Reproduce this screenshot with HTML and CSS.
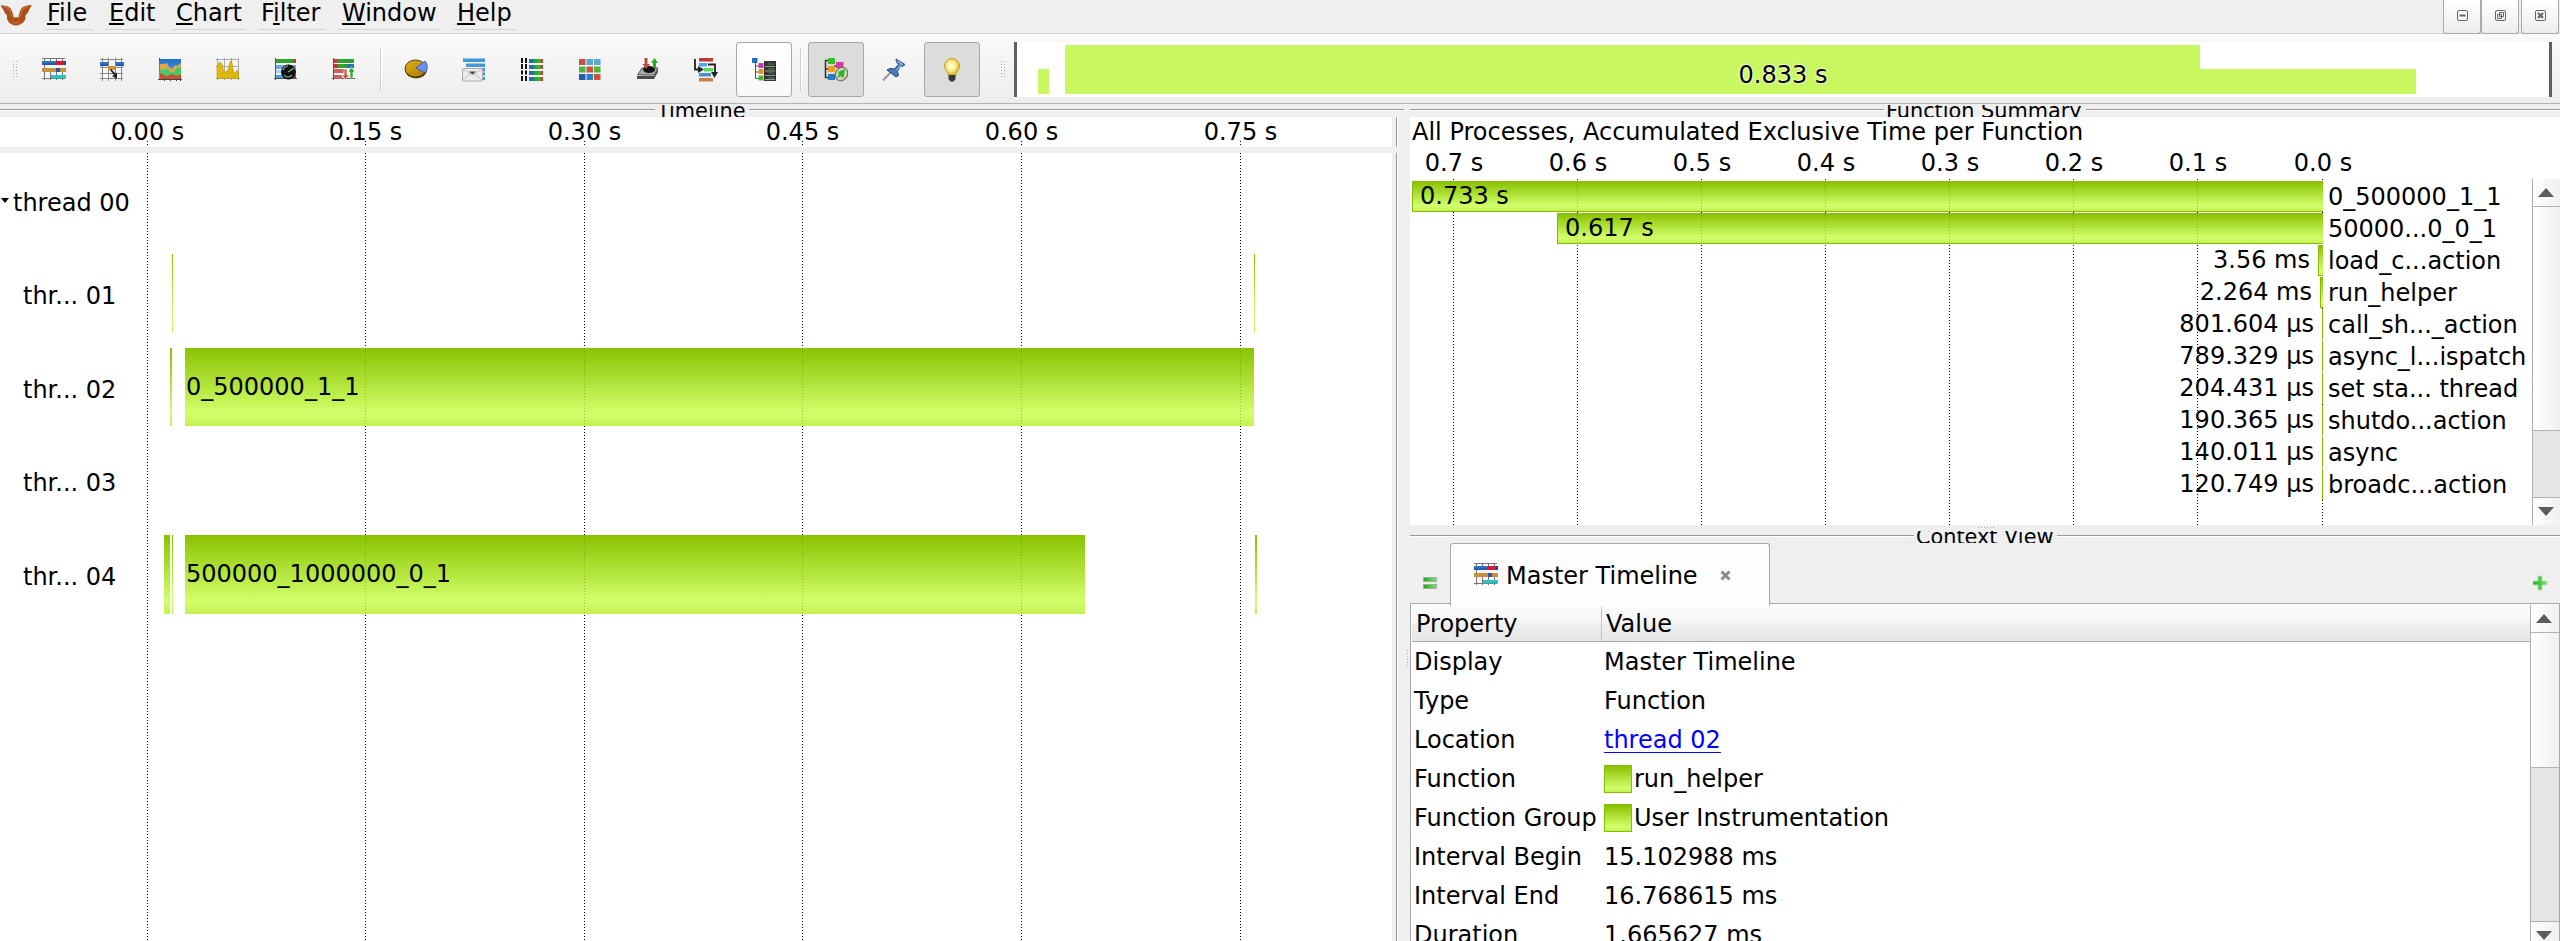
FILE: index.html
```html
<!DOCTYPE html>
<html lang="en">
<head>
<meta charset="utf-8">
<title>Trace View</title>
<link rel="stylesheet" href="styles.css">
</head>
<body>
<svg class="defs" width="0" height="0">
  <defs>
    <linearGradient id="gBlue" x1="0" y1="0" x2="0" y2="1"><stop offset="0" stop-color="#3a7bd0"/><stop offset="1" stop-color="#1c4fa4"/></linearGradient>
    <linearGradient id="gGold" x1="0" y1="0" x2="1" y2="1"><stop offset="0" stop-color="#e0b020"/><stop offset="1" stop-color="#a87800"/></linearGradient>
    <linearGradient id="gSky" x1="0" y1="0" x2="0" y2="1"><stop offset="0" stop-color="#2070c8"/><stop offset="1" stop-color="#50a8e8"/></linearGradient>
    <linearGradient id="gGreen" x1="0" y1="0" x2="1" y2="0"><stop offset="0" stop-color="#18a818"/><stop offset="1" stop-color="#7ae870"/></linearGradient>
    <linearGradient id="gRgb" x1="0" y1="0" x2="1" y2="0"><stop offset="0" stop-color="#2468c0"/><stop offset=".3" stop-color="#2468c0"/><stop offset=".4" stop-color="#28a428"/><stop offset=".8" stop-color="#30b830"/><stop offset=".88" stop-color="#e03030"/></linearGradient>
    <radialGradient id="gBulb" cx=".45" cy=".45"><stop offset="0" stop-color="#fffde0"/><stop offset=".6" stop-color="#f8ec90"/><stop offset="1" stop-color="#e0bc30"/></radialGradient>
    <symbol id="timeline" viewBox="0 0 24 24">
      <path d="M2.5 0v22M8.500 0v22M14.500 0v22M20.500 0v22M0 .500h23M0 20.500h23" stroke="#777" fill="none"/>
      <path d="M3 7h18v3H3zM3 14h5v6H3z" fill="#f4f4f4"/>
      <path d="M0 3h14v4H0z" fill="url(#gBlue)"/><path d="M14 3h8v4h-8z" fill="#d81830"/><path d="M22 3h2v4h-2z" fill="#1c4fa4"/>
      <path d="M0 10h24v4H0z" fill="#c8903c"/><path d="M14 10h4v4h-4z" fill="#2458a8"/>
      <path d="M9 17h15v3.500H9z" fill="#30c0c0"/>
    </symbol>
  </defs>
</svg>

<div class="app">
  <header class="menubar">
    <svg class="logo" width="34" height="28" viewBox="0 0 34 28"><path d="M1 5C3 6 8 5 11 9C13 12 13 16 14 18Q16 16 18 18C19 16 19 12 21 9C24 5 29 6 31.500 4.500C31 8 29 9 28.500 11C28 14 25 14 25.500 17C26 21 21 25.500 16 25.500C11 25.500 6.500 21 7 17C7.500 14 4.500 14 4 11C3.500 9 1.500 8 1 5Z" fill="#a8501c"/><path d="M4 7C8 7 11 11 12 17M28 7C24 7 21 11 20 17M12 21Q16 25 20 21" fill="none" stroke="#c8682c" stroke-width="1.500"/></svg>
    <nav class="menus">
      <span class="menu m-file"><u>F</u>ile</span>
      <span class="menu m-edit"><u>E</u>dit</span>
      <span class="menu m-chart"><u>C</u>hart</span>
      <span class="menu m-filter">F<u>i</u>lter</span>
      <span class="menu m-window"><u>W</u>indow</span>
      <span class="menu m-help"><u>H</u>elp</span>
    </nav>
    <div class="winbtns">
      <span class="winbtn"><svg width="11" height="11" viewBox="0 0 11 11"><rect x=".5" y=".5" width="10" height="10" rx="1.500"/><path d="M2.500 5.500h6" stroke-width="2"/></svg></span>
      <span class="winbtn"><svg width="11" height="11" viewBox="0 0 11 11"><rect x=".5" y=".5" width="10" height="10" rx="1.500"/><path d="M4.500 2.500h4v4h-4zM2.500 4.500h4v4h-4z"/></svg></span>
      <span class="winbtn winclose"><svg width="11" height="11" viewBox="0 0 11 11"><rect x=".5" y=".5" width="10" height="10" rx="1.500"/><path d="M3 3l5 5M8 3l-5 5" stroke-width="2"/></svg></span>
    </div>
  </header>

  <div class="toolbar">
    <div class="tools">
      <i class="grip"></i>
      <span class="tool"><svg class="ico"><use href="#timeline"/></svg></span>
      <span class="tool"><svg class="ico" viewBox="0 0 24 24"><path d="M2.500 0v23M8.500 0v23M15.500 0v23M21.500 0v23M0 1.500h23M0 9.500h23M0 15.500h23M0 20.500h23" stroke="#888" fill="none"/><path d="M3 10h5v5H3zM16 10h5v5h-5zM3 16h5v4H3zM16 16h5v4h-5z" fill="#fafafa"/><path d="M0 4h8v4H0zM16 4h8v4h-8z" fill="url(#gBlue)"/><path d="M8 8h8v4H8z" fill="#d0903c"/><path d="M11 11l5 5 1-2v7l-5-3 2-1-4-5z" fill="#222"/></svg></span>
      <span class="tool"><svg class="ico" viewBox="0 0 24 24"><path d="M1.500 0v22M0 21.500h24M6.500 20v3M12.500 20v3M18.500 20v3M22.500 18v5" stroke="#444" fill="none"/><path d="M1 1h22v20H1z" fill="url(#gSky)"/><path d="M2 6h4l3-1 2 4 3 2 3-4 2 1 4-3v9H2z" fill="#e0a848"/><path d="M2 11l4 1 4-2 2 4h4l2-4 5-1v9H2z" fill="#48c868"/><path d="M2 15l4 2 3 1 5-2 5 2 4-2v5H2z" fill="#c85030"/></svg></span>
      <span class="tool"><svg class="ico" viewBox="0 0 24 24"><path d="M1.500 0v22M0 20.500h24M8.500 0v22M15.500 0v22M22.500 0v22M0 1.500h23M0 8.500h23" stroke="#aaa" fill="none"/><path d="M1 20.500V7l3-3 2 2 2 9 4-3 2-8 1.500-1L17 11l1 4 2-1 1-2 1.500 2v6.500z" fill="#dcb810" stroke="#b89000" stroke-width=".6"/></svg></span>
      <span class="tool"><svg class="ico" viewBox="0 0 24 24"><path d="M1.500 0v22M0 20.500h23" stroke="#555"/><path d="M2 1h20v4H2z" fill="#30a030"/><path d="M2 7h20v4H2z" fill="#68a8dc"/><path d="M2 12h20v3H2z" fill="#a8d4f0"/><path d="M2 17h20v3H2z" fill="#48a0d8"/><path d="M19 1h3v4h-3zM19 17h3v3h-3z" fill="#d03030"/><circle cx="14.500" cy="14" r="7.500" fill="#111"/><path d="M14 14l6-4M9 12a6 6 0 0 1 5-4M10 17a5 5 0 0 0 8 0" stroke="#8ab88a" stroke-width="1.200" fill="none"/></svg></span>
      <span class="tool"><svg class="ico" viewBox="0 0 24 24"><path d="M1.500 0v22M0 20.500h23" stroke="#555"/><path d="M2 1h20v4H2zM2 6h13v4H2z" fill="#30a030"/><path d="M15 6h7v4h-7z" fill="#2870b8"/><path d="M2 11h10v4H2zM2 17h8v4H2z" fill="#c86060"/><path d="M2 1h3v4H2zM2 6h4v4H2z" fill="#d03030"/><path d="M12 11h3v6h2.500l-4 5-4-5H12z" fill="#c86050" stroke="#fff" stroke-width=".6"/><path d="M18 20v-6h-2l3.500-5 3.500 5h-2v6z" fill="#28b028" stroke="#fff" stroke-width=".6"/></svg></span>
      <i class="sep"></i>
      <span class="tool"><svg class="ico" viewBox="0 0 24 24"><ellipse cx="12" cy="12" rx="11" ry="8.500" fill="#5a4000"/><ellipse cx="11.500" cy="10.500" rx="10.500" ry="8.500" fill="url(#gGold)" stroke="#5a4000"/><path d="M12 10l9-7c3 4 3 8 0 12z" fill="#6890f0" stroke="#3050a0" stroke-width=".8"/></svg></span>
      <span class="tool"><svg class="ico" viewBox="0 0 24 24"><path d="M1 .500h22v3.500H1zM4 5.500h19v3.500H4zM9 10h14v3.500H9zM20 14.500h3v3h-3zM20 19h3v3h-3z" fill="#4098d8"/><rect x=".5" y="10.500" width="20" height="12.500" rx="1" fill="#ececec" stroke="#aaa"/><path d="M1 11l9.500 6 9.500-6M1 22l7-6M20 22l-7-6" fill="none" stroke="#bbb"/><path d="M7 13.500h7l-3.500 3z" fill="#444"/></svg></span>
      <span class="tool"><svg class="ico" viewBox="0 0 24 24"><path d="M1 0h2v5H1zM5 0h2v5H5zM1 6h2v5H1zM5 6h2v5H5zM1 12.500h2v4H1zM5 12.500h2v4H5zM1 18h2v5H1zM5 18h2v5H5z" fill="#111"/><path d="M9 1h14v4H9zM9 7h14v4H9zM9 13h14v4H9zM9 19h14v4H9z" fill="url(#gRgb)"/></svg></span>
      <span class="tool"><svg class="ico" viewBox="0 0 24 24"><path d="M1 1h6.500v6H1zM8.500 8.500H15v6H8.500zM16 16h6.500v6H16z" fill="#cc5040"/><path d="M8.500 1H15v6H8.500zM16 1h6.500v6H16zM16 8.500h0z" fill="#58a8d0"/><path d="M1 8.500h6.500v6H1zM16 8.500h6.500v6H16z" fill="#48b838"/><path d="M1 16h6.500v6H1z" fill="#2458a8"/><path d="M8.500 16H15v6H8.500z" fill="#2880c8"/></svg></span>
      <span class="tool"><svg class="ico" viewBox="0 0 24 24"><path d="M1.500 17L6 10h16l-4 7z" fill="#aaa" stroke="#555"/><path d="M1 18h17l4-7v3l-4 7H1z" fill="#4c4c4c"/><ellipse cx="13" cy="11.500" rx="6" ry="3.500" fill="#111"/><path d="M8.500 0h3v6H14l-4 5-3.500-5h2z" fill="#c84840"/><path d="M17 10V5h-2l3.500-5L22 5h-2v5z" fill="#28a828"/></svg></span>
      <span class="tool"><svg class="ico" viewBox="0 0 24 24"><path d="M5 0h14v3.500H5z" fill="#c03838"/><path d="M5 5h8v3.500H5z" fill="#48a8f0"/><path d="M10 10h9v3.500h-9z" fill="#58d858"/><path d="M5 15h12v3.500H5z" fill="#4890c8"/><path d="M5 20h14v3.500H5z" fill="#c88048"/><path d="M1 1v10.500h4M14 6.500h7V15" stroke="#222" stroke-width="1.800" fill="none"/><path d="M4 8l6 3.500L4 15zM17 14h7l-3.500 6z" fill="#222"/></svg></span>
      <span class="tool raised"><svg class="ico" viewBox="0 0 24 24"><path d="M12 3h12v20H12z" fill="#333"/><path d="M13 8.500h10M13 13h10M13 17.500h10M13 21.500h10" stroke="#999"/><path d="M16 6h6M16 11h6M16 15h6M16 20h6" stroke="#484"/><path d="M3.500 5v15.500H7M3.500 8H7M3.500 14H7" stroke="#456" fill="none"/><path d="M0 0h5.500v5H0z" fill="#2070b8"/><path d="M6.500 5h5v5h-5z" fill="#c838a8"/><path d="M6.500 11h5v5h-5z" fill="#e89028"/><path d="M6.500 17.500h5v5h-5z" fill="#48b830"/></svg></span>
      <i class="sep"></i>
      <span class="tool checked"><svg class="ico" viewBox="0 0 24 24"><path d="M4 2.500H1.500v17H4M1.500 11H4M10 8h4" stroke="#333" stroke-width="1.500" fill="none"/><path d="M4 0h7v6H4z" fill="#38c028"/><path d="M4 8h7v6H4z" fill="#f0a020"/><path d="M4 16h7v6H4z" fill="#2878c8"/><path d="M12 4h7.500v6H12z" fill="#d838a8"/><ellipse cx="17.500" cy="16" rx="6" ry="7" transform="rotate(30 17.500 16)" fill="#d8ccb8" stroke="#6c6050"/><path d="M21 11l-1.500 9-2.500-2-4 2 2-4-1-2z" fill="#20c020"/></svg></span>
      <span class="tool"><svg class="ico" viewBox="0 0 24 24"><path d="M1 22.500L10 13" stroke="#999" stroke-width="2"/><path d="M14 1l9 5.500-2.500 2-2-.5-3 5.500 1 4-2.500 1.500L5 12l3-1.500 4.500.500 4-4.500-2-2.500z" fill="#4878b8" stroke="#28487c"/><path d="M15 3l5 3-5 6" stroke="#88b0e0" stroke-width="1.500" fill="none"/></svg></span>
      <span class="tool checked"><svg class="ico" viewBox="0 0 24 24"><path d="M12 .500a7.500 7.500 0 0 1 7.500 7.500c0 4-3.500 5.500-4 9h-7c-.5-3.500-4-5-4-9A7.500 7.500 0 0 1 12 .500z" fill="url(#gBulb)" stroke="#c8a020"/><path d="M8.500 17h7v4l-2 2.500h-3l-2-2.500z" fill="#383838"/></svg></span>
      <i class="grip grip2"></i>
    </div>
    <div class="overview">
      <div class="ovbars">
        <i class="ov ov-a"></i><i class="ov ov-b"></i><i class="ov ov-c"></i>
      </div>
      <span class="ovlabel">0.833 s</span>
    </div>
  </div>

  <main class="panes">
    <section class="left">
      <div class="title"><i class="rule r-tl1"></i><span class="ttext">Timeline</span><i class="rule grow"></i></div>
      <div class="frame axisframe">
        <div class="axis">
          <span class="tick" style="left:147.500px">0.00 s</span><span class="tick" style="left:365.500px">0.15 s</span><span class="tick" style="left:584.500px">0.30 s</span><span class="tick" style="left:802.500px">0.45 s</span><span class="tick" style="left:1021.500px">0.60 s</span><span class="tick" style="left:1240.500px">0.75 s</span>
          <div class="dots mini"><i style="left:147px"></i><i style="left:365px"></i><i style="left:584px"></i><i style="left:802px"></i><i style="left:1021px"></i><i style="left:1240px"></i></div>
        </div>
      </div>
      <div class="frame chartframe">
        <div class="chart">
          <div class="dots"><i style="left:147px"></i><i style="left:365px"></i><i style="left:584px"></i><i style="left:802px"></i><i style="left:1021px"></i><i style="left:1240px"></i></div>
          <div class="rows">
            <div class="row rootrow"><i class="fold"></i><span class="thr root">thread 00</span></div>
            <div class="row"><span class="thr">thr... 01</span><i class="ev" style="left:172px;width:1px"></i><i class="ev" style="left:1254px;width:1px"></i></div>
            <div class="row"><span class="thr">thr... 02</span><i class="ev ev78" style="left:170px;width:2px"></i><span class="ev ev78" style="left:185px;width:1069px">0_500000_1_1</span></div>
            <div class="row"><span class="thr">thr... 03</span></div>
            <div class="row"><span class="thr">thr... 04</span><i class="ev" style="left:164px;width:6px"></i><i class="ev" style="left:172px;width:1px"></i><span class="ev" style="left:185px;width:900px">500000_1000000_0_1</span><i class="ev" style="left:1255px;width:2px"></i></div>
          </div>
          <div class="dots faint"><i style="left:365px"></i><i style="left:584px"></i><i style="left:802px"></i><i style="left:1021px"></i><i style="left:1240px"></i></div>
        </div>
      </div>
    </section>

    <section class="right">
      <div class="title"><i class="rule r-fs1"></i><span class="ttext">Function Summary</span><i class="rule grow"></i></div>
      <div class="summary">
        <div class="sumhead">All Processes, Accumulated Exclusive Time per Function</div>
        <div class="sumaxis"><span class="tick" style="left:44px">0.7 s</span><span class="tick" style="left:168px">0.6 s</span><span class="tick" style="left:292px">0.5 s</span><span class="tick" style="left:416px">0.4 s</span><span class="tick" style="left:540px">0.3 s</span><span class="tick" style="left:664px">0.2 s</span><span class="tick" style="left:788px">0.1 s</span><span class="tick" style="left:913px">0.0 s</span></div>
        <div class="sumbody">
          <div class="sumchart">
            <div class="dots"><i style="left:43px"></i><i style="left:167px"></i><i style="left:291px"></i><i style="left:415px"></i><i style="left:539px"></i><i style="left:663px"></i><i style="left:787px"></i><i style="left:912px"></i></div>
            <div class="fn"><span class="val"></span><span class="fbar" style="width:911px">0.733 s</span><span class="name">0_500000_1_1</span></div>
            <div class="fn"><span class="val"></span><span class="fbar" style="width:766px">0.617 s</span><span class="name">50000...0_0_1</span></div>
            <div class="fn"><span class="val">3.56 ms</span><i class="fbar" style="width:5px"></i><span class="name">load_c...action</span></div>
            <div class="fn"><span class="val">2.264 ms</span><i class="fbar" style="width:3px"></i><span class="name">run_helper</span></div>
            <div class="fn"><span class="val">801.604 µs</span><i class="fbar" style="width:1px"></i><span class="name">call_sh..._action</span></div>
            <div class="fn"><span class="val">789.329 µs</span><i class="fbar" style="width:1px"></i><span class="name">async_l...ispatch</span></div>
            <div class="fn"><span class="val">204.431 µs</span><i class="fbar" style="width:1px"></i><span class="name">set sta... thread</span></div>
            <div class="fn"><span class="val">190.365 µs</span><i class="fbar" style="width:1px"></i><span class="name">shutdo...action</span></div>
            <div class="fn"><span class="val">140.011 µs</span><i class="fbar" style="width:1px"></i><span class="name">async</span></div>
            <div class="fn"><span class="val">120.749 µs</span><i class="fbar" style="width:1px"></i><span class="name">broadc...action</span></div>
            <div class="dots faint"><i style="left:167px"></i><i style="left:291px"></i><i style="left:415px"></i><i style="left:539px"></i><i style="left:663px"></i><i style="left:787px"></i></div>
          </div>
          <div class="scroll sb1">
            <span class="sbtn"><svg width="16" height="9"><path d="M8 0L16 9H0z"/></svg></span>
            <i class="thumb"></i><i class="groove"></i>
            <span class="sbtn down"><svg width="16" height="9"><path d="M0 0H16L8 9z"/></svg></span>
          </div>
        </div>
      </div>
      <i class="grip-h"></i>
      <div class="title title2"><i class="rule r-cv1"></i><span class="ttext">Context View</span><i class="rule grow"></i></div>
      <div class="tabbar">
        <svg class="eq" width="14" height="12"><path d="M.500.500h13v4H.500zM.500 7.500h13v4H.500z" fill="url(#gGreen)" stroke="#a8a8a8"/></svg>
        <div class="tab"><svg class="ico"><use href="#timeline"/></svg><span class="tabtext">Master Timeline</span><svg class="x" width="11" height="11" viewBox="0 0 11 11"><path d="M1.500 1.500l8 8M9.500 1.500l-8 8" stroke="#8c8c84" stroke-width="3"/></svg></div>
        <svg class="plus" width="16" height="16"><path d="M6 1h4v5h5v4h-5v5H6v-5H1V6h5z" fill="url(#gGreen)" stroke="#bcd8b8" stroke-width=".8"/></svg>
      </div>
      <div class="props">
        <div class="table">
          <div class="thead"><span class="th th1">Property</span><span class="th th2">Value</span></div>
          <div class="tr"><span class="k">Display</span><span>Master Timeline</span></div>
          <div class="tr"><span class="k">Type</span><span>Function</span></div>
          <div class="tr"><span class="k">Location</span><span class="link">thread 02</span></div>
          <div class="tr"><span class="k">Function</span><i class="sw"></i><span>run_helper</span></div>
          <div class="tr"><span class="k">Function Group</span><i class="sw"></i><span>User Instrumentation</span></div>
          <div class="tr"><span class="k">Interval Begin</span><span>15.102988 ms</span></div>
          <div class="tr"><span class="k">Interval End</span><span>16.768615 ms</span></div>
          <div class="tr"><span class="k">Duration</span><span>1.665627 ms</span></div>
        </div>
        <div class="scroll sb2">
          <span class="sbtn"><svg width="16" height="9"><path d="M8 0L16 9H0z"/></svg></span>
          <i class="thumb"></i><i class="groove"></i>
          <span class="sbtn down"><svg width="16" height="9"><path d="M0 0H16L8 9z"/></svg></span>
        </div>
      </div>
    </section>
    <i class="grip-v"></i>
  </main>
</div>
</body>
</html>
```

FILE: styles.css
```css
* { box-sizing: border-box; }
html, body { margin: 0; height: 941px; overflow: hidden; }
body { background: #efefef; color: #000; font: 24px/28px "DejaVu Sans", sans-serif; white-space: nowrap; }
i { display: block; font-style: normal; flex: none; }
svg { display: block; flex: none; }
.defs { position: absolute; }
.ico { width: 24px; height: 24px; }
.app { display: flex; flex-direction: column; width: 2560px; height: 941px; overflow: hidden; }

/* Menu bar */
.menubar { display: flex; height: 34px; flex: none; border-bottom: 1px solid #d2d2d2; }
.logo { margin-right: 10px; }
.menus { display: flex; flex: 1; height: 30px; }
.menu { height: 30px; padding-left: 3px; border-bottom: 1px solid #d4d4d4; line-height: 27px; }
.menu u { text-decoration: underline; text-decoration-thickness: 2px; text-underline-offset: 2px; text-decoration-skip-ink: none; }
.m-file { width: 49px; margin-right: 12px; }
.m-edit { width: 55px; margin-right: 12px; padding-left: 4px; }
.m-chart { width: 74px; margin-right: 12px; padding-left: 4px; }
.m-filter { width: 68px; margin-right: 12px; }
.m-window { width: 103px; margin-right: 12px; padding-left: 4px; }
.m-help { width: 63px; padding-left: 4px; }
.winbtns { display: flex; width: 117px; }
.winbtn { width: 38px; height: 34px; display: flex; justify-content: center; padding-top: 10px; border: 1px solid #aaa; border-top: 0; border-radius: 0 0 3px 3px; background: linear-gradient(#fff, #ededed); }
.winclose { margin-left: 2px; }
.winbtn svg { fill: none; stroke: #666; }

/* Toolbar */
.toolbar { display: flex; height: 70px; flex: none; background: linear-gradient(#fafafa, #ededed); border-bottom: 1px solid #b4b4b4; padding-top: 8px; align-items: flex-start; }
.tools { display: flex; width: 1014px; gap: 2px; height: 55px; align-items: center; }
.tool { width: 56px; height: 55px; display: flex; align-items: flex-start; justify-content: center; padding-top: 16px; border-radius: 3px; }
.raised { background: linear-gradient(#fff, #f9f9f9); border: 1px solid #a8a8a8; padding-top: 15px; }
.checked { background: #dcdcdc; border: 1px solid #a8a8a8; padding-top: 15px; }
.sep { width: 12px; height: 43px; background: linear-gradient(#d0d0d0, #d0d0d0) 6px 0/1px 100% no-repeat, linear-gradient(#fff, #fff) 7px 0/1px 100% no-repeat; }
.grip { width: 4px; height: 17px; margin: 0 7px 0 13px; background: radial-gradient(circle at .5px .5px, #aaa .6px, transparent .8px) 0 0/3px 3px; }
.grip2 { margin: 0 0 0 19px; }
.overview { width: 1538px; height: 55px; background: #fff; border: 3px solid #606060; border-width: 0 3px; display: grid; }
.ovbars { grid-area: 1/1; display: flex; align-items: flex-end; padding: 3px 0 3px 21px; }
.ov { background: #c9f760; }
.ov-a { width: 11px; height: 25px; margin-right: 16px; }
.ov-b { width: 1135px; height: 49px; }
.ov-c { width: 216px; height: 25px; }
.ovlabel { grid-area: 1/1; align-self: start; justify-self: center; margin-top: 19px; text-shadow: 0 0 3px #fff, 0 0 2px #fff; }

/* Split panes */
.panes { display: flex; flex: 1; min-height: 0; position: relative; }
.left { width: 1404px; margin-right: 6px; display: flex; flex-direction: column; }
.right { width: 1150px; display: flex; flex-direction: column; position: relative; }
.title { display: flex; height: 13px; flex: none; overflow: hidden; font-size: 20.8px; }
.rule { height: 2px; margin-top: 5px; background: linear-gradient(#999 50%, #fff 50%); }
.grow { flex: 1; }
.ttext { margin: -7px 4px 0 2px; height: 28px; clip-path: inset(8px 0 0 0); }
.r-tl1 { width: 655px; }
.r-fs1 { width: 474px; }
.r-cv1 { width: 504px; }
.frame { width: 1398px; padding-right: 6px; flex: none; position: relative; }
.frame::after { content: ""; position: absolute; top: 0; bottom: 0; right: 0; width: 2px; background: linear-gradient(90deg, #999 50%, #fff 50%); }
.axisframe { height: 30px; margin-bottom: 6px; }
.chartframe { height: 788px; }
.axis { height: 30px; background: #fff; position: relative; padding-top: 1px; }
.tick { position: absolute; transform: translateX(-50%); }
.dots { position: absolute; inset: 0; pointer-events: none; }
.dots i { position: absolute; top: 0; bottom: 0; width: 1px; background: linear-gradient(#000 1px, transparent 1px) 0 0/1px 3px; }
.mini { top: 24px; }
.faint { opacity: .22; }
.chart { height: 788px; background: #fff; position: relative; }
.rows { display: grid; grid-template-rows: 94px 94px 93px 94px 94px; padding-top: 7px; }
.row { position: relative; padding-top: 28px; display: flex; align-items: flex-start; }
.rootrow { padding-top: 29px; }
.thr { padding-left: 23px; }
.root { padding-left: 5px; }
.fold { width: 8px; height: 5px; margin: 9px -1px 0 1px; background: #000; clip-path: polygon(0 0, 100% 0, 50% 100%); }
.ev { position: absolute; top: 0; height: 79px; padding-left: 1px; line-height: 78px; overflow: hidden; background: linear-gradient(#8ac200, #cefd66 80%, #d2ff6a 84%, #c4f055); }
.ev78 { height: 78px; }
.ev:is(i) { padding: 0; }

/* Function summary */
.summary { height: 408px; flex: none; background: #fff; display: flex; flex-direction: column; }
.sumhead { padding-left: 2px; padding-top: 1px; height: 32px; }
.sumaxis { height: 30px; position: relative; }
.sumbody { flex: 1; display: flex; min-height: 0; }
.sumchart { width: 1122px; position: relative; padding-top: 2px; }
.fn { display: flex; height: 32px; width: 1122px; }
.val { flex: 1; text-align: right; padding: 1px 8px 0 0; position: relative; }
.val:empty { padding: 0; }
.fbar { height: 31px; flex: none; position: relative; padding-left: 7px; border: 1px solid #86bd00; border-right: 0; background: linear-gradient(#8ac200, #cefd66 78%, #d2ff6a 84%, #c4f055); }
i.fbar { padding: 0; }
.fn .name { width: 209px; padding-left: 5px; padding-top: 2px; flex: none; }
.scroll { display: flex; flex-direction: column; flex: none; border-left: 1px solid #b0b0b0; background: linear-gradient(90deg, #fff, #f0f0f0); }
.scroll svg { fill: #5c5c5c; }
.sb1 { width: 28px; }
.sbtn { height: 28px; border-bottom: 1px solid #b0b0b0; padding: 9px 0 0 5px; flex: none; }
.sb1 .thumb { height: 223px; }
.groove { background: #e5e5e5; border: solid #b0b0b0; border-width: 1px 0; }
.sb1 .groove { height: 68px; }
.down { border: 0; }

/* Context view */
.grip-h { position: absolute; left: 568px; top: 423px; width: 17px; height: 1px; background: linear-gradient(90deg, #aaa 1px, transparent 1px) 0 0/3px 1px; }
.grip-v { position: absolute; left: 1407px; top: 546px; width: 1px; height: 17px; background: linear-gradient(#aaa 1px, transparent 1px) 0 0/1px 3px; }
.title2 { margin-top: 5px; }
.tabbar { height: 61px; flex: none; display: flex; align-items: flex-start; border-bottom: 1px solid #a8a8a8; }
.eq { margin: 34px 13px 0; }
.tab { width: 320px; height: 63px; display: flex; border: 1px solid #a8a8a8; border-bottom: 0; border-radius: 3px 3px 0 0; background: #fdfdfd; padding: 19px 0 0 23px; position: relative; z-index: 1; }
.tabtext { width: 222px; padding-left: 8px; margin-top: -1px; }
.x { margin: 7px 0 0; }
.plus { margin: 32px 0 0 762px; }
.props { flex: 1; min-height: 0; overflow: hidden; display: flex; border: 1px solid #a8a8a8; border-width: 0 1px; padding: 1px 1px 0 1px; background: #fff; }
.table { width: 1118px; flex: none; }
.thead { height: 37px; display: flex; background: linear-gradient(#fcfcfc, #f6f6f6 50%, #efefef 51%, #e6e6e6); border-bottom: 1px solid #a8a8a8; padding-top: 2px; }
.th { height: 34px; padding-top: 3px; }
.th1 { width: 190px; padding-left: 4px; border-right: 1px solid #c4c4c4; }
.th2 { padding-left: 4px; }
.tr { height: 39px; display: flex; align-items: center; padding-left: 2px; }
.k { width: 190px; flex: none; }
.sw { width: 28px; height: 28px; margin-right: 2px; border: 1px solid #86bd00; background: linear-gradient(#8ac200, #d2ff6a 84%, #c4f055); }
.link { color: #00f; text-decoration: underline; text-decoration-thickness: 1px; text-underline-offset: 4px; }
.sb2 { width: 29px; }
.sb2 .thumb { height: 134px; }
.sb2 .groove { height: 155px; }
```
